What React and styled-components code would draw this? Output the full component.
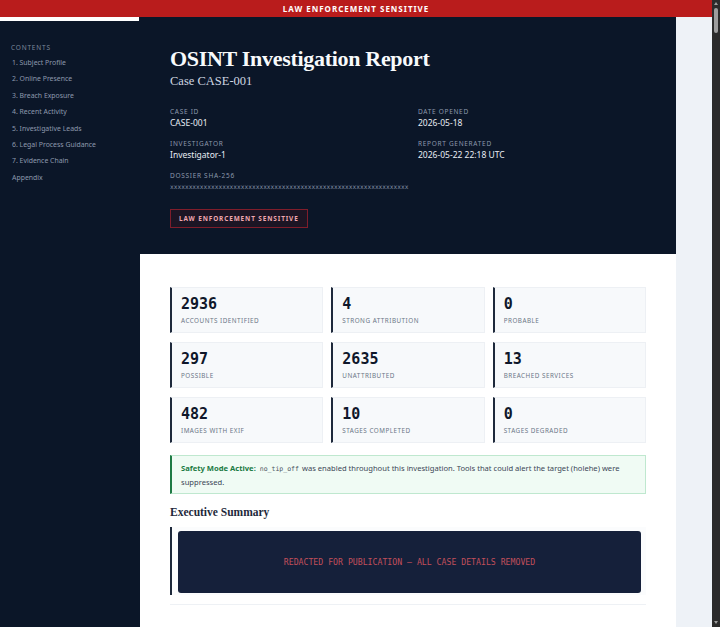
import React from "react";
import styled, { createGlobalStyle } from "styled-components";

const Global = createGlobalStyle`
  body {
    margin: 0;
    background: #eef2f7;
    font-family: "Noto Sans", "Open Sans", sans-serif;
    color: #1e293b;
  }
  * { box-sizing: border-box; }
`;

const Banner = styled.div`
  height: 17px;
  padding-right: 8px;
  background: #b91c1c;
  color: #fff;
  font-size: 8px;
  font-weight: 700;
  letter-spacing: 1px;
  display: flex;
  align-items: center;
  justify-content: center;
`;

const Layout = styled.div`
  display: grid;
  grid-template-columns: 140px 536px 1fr;
  min-height: 1400px;
`;

const Sidebar = styled.nav`
  background: #0b1628;
  display: flex;
  flex-direction: column;
`;

const Progress = styled.div`
  height: 4px;
  width: 139px;
  background: #ffffff;
`;

const TocTitle = styled.div`
  margin: 22px 0 3px 11px;
  font-size: 6.5px;
  letter-spacing: 0.8px;
  color: #7c889b;
  text-transform: uppercase;
`;

const TocLink = styled.a`
  display: block;
  padding-left: 12px;
  height: 16.4px;
  line-height: 16.4px;
  font-size: 6.9px;
  color: #8d99ad;
  text-decoration: none;
`;

const Main = styled.main`
  background: #ffffff;
  display: flex;
  flex-direction: column;
`;

const Header = styled.header`
  background: #0b1628;
  padding: 28px 30px 26px 30px;
  color: #fff;
`;

const Title = styled.h1`
  margin: 0;
  font-family: "Liberation Serif", "DejaVu Serif", serif;
  font-size: 22px;
  letter-spacing: -0.3px;
  font-weight: 700;
  line-height: 28px;
  color: #f8fafc;
`;

const Subtitle = styled.div`
  font-family: "Liberation Serif", "DejaVu Serif", serif;
  font-size: 12.5px;
  color: #cfd6e1;
  margin-top: 1px;
`;

const MetaGrid = styled.div`
  margin-top: 18px;
  display: grid;
  grid-template-columns: 248px 1fr;
  row-gap: 10px;
`;

const Meta = styled.div`
  grid-column: ${(p) => (p.$wide ? "1 / -1" : "auto")};
`;

const MetaLabel = styled.div`
  font-size: 6.5px;
  letter-spacing: 0.7px;
  text-transform: uppercase;
  color: #8b98ac;
  line-height: 10px;
`;

const MetaValue = styled.div`
  font-size: 8.5px;
  color: #e8edf4;
  line-height: 12px;
`;

const Hash = styled.div`
  font-family: "DejaVu Sans Mono", monospace;
  font-size: 6.2px;
  color: #7f8ba0;
  line-height: 12px;
`;

const Badge = styled.div`
  display: inline-flex;
  align-items: center;
  margin-top: 16px;
  height: 19px;
  padding: 0 8px;
  border: 1px solid #7f1d2b;
  background: #1c1524;
  color: #f0a8b0;
  font-size: 6.4px;
  font-weight: 700;
  letter-spacing: 0.9px;
`;

const Content = styled.div`
  padding: 33px 30px 0 30px;
`;

const StatGrid = styled.div`
  display: grid;
  grid-template-columns: repeat(3, 1fr);
  column-gap: 8px;
  row-gap: 9px;
`;

const StatCard = styled.div`
  height: 46px;
  background: #f7f9fb;
  border: 1px solid #edf0f4;
  border-left: 2px solid #1e293b;
  padding: 8px 9px 0 9px;
`;

const StatValue = styled.div`
  font-family: "DejaVu Sans Mono", monospace;
  font-weight: 700;
  font-size: 15px;
  line-height: 17px;
  color: #0f172a;
`;

const StatLabel = styled.div`
  margin-top: 3px;
  font-size: 6.3px;
  letter-spacing: 0.5px;
  text-transform: uppercase;
  color: #6b7686;
`;

const Safety = styled.div`
  margin-top: 12px;
  background: #f0fbf4;
  border: 1px solid #bfe8cf;
  border-left: 2px solid #1f7a45;
  padding: 6px 9px 4px 9px;
  font-size: 7.6px;
  line-height: 13px;
  color: #3b4656;
`;

const SafetyStrong = styled.strong`
  color: #1a7a43;
  font-weight: 700;
`;

const Code = styled.code`
  font-family: "DejaVu Sans Mono", monospace;
  font-size: 6.5px;
  color: #4b5563;
  margin: 0 3px 0 4px;
`;

const Section = styled.section`
  margin-top: 11px;
  padding-bottom: 9px;
  border-bottom: 1px solid #eef1f5;
`;

const SectionTitle = styled.h2`
  margin: 0 0 8px 0;
  font-family: "Liberation Serif", "DejaVu Serif", serif;
  font-size: 11.5px;
  font-weight: 700;
  color: #1e293b;
  line-height: 14px;
`;

const Quote = styled.div`
  background: #fbfcfd;
  border-left: 2px solid #1e293b;
  padding: 4px 5px 2px 6px;
`;

const Redacted = styled.div`
  height: 62px;
  background: #15203a;
  border-radius: 3px;
  display: flex;
  align-items: center;
  justify-content: center;
  font-family: "DejaVu Sans Mono", monospace;
  font-size: 8.2px;
  color: #c24f5b;
`;

const Gutter = styled.div`
  background: #eef2f7;
`;

const ScrollTrack = styled.div`
  position: fixed;
  top: 0;
  right: 0;
  width: 8px;
  height: 100vh;
  background: #2b2b2b;
  display: flex;
  flex-direction: column;
  align-items: center;
`;

const Arrow = styled.div`
  width: 0;
  height: 0;
  border-left: 2.5px solid transparent;
  border-right: 2.5px solid transparent;
  ${(p) => (p.$down ? "border-top: 3px solid #9d9d9d;" : "border-bottom: 3px solid #9d9d9d;")}
  margin: ${(p) => (p.$down ? "auto 0 3px 0" : "2px 0 0 0")};
`;

const Thumb = styled.div`
  margin-top: 3px;
  width: 4px;
  height: 25px;
  border-radius: 2px;
  background: #9d9d9d;
`;

const toc = [
  "1. Subject Profile",
  "2. Online Presence",
  "3. Breach Exposure",
  "4. Recent Activity",
  "5. Investigative Leads",
  "6. Legal Process Guidance",
  "7. Evidence Chain",
  "Appendix",
];

const stats = [
  ["2936", "Accounts Identified"],
  ["4", "Strong Attribution"],
  ["0", "Probable"],
  ["297", "Possible"],
  ["2635", "Unattributed"],
  ["13", "Breached Services"],
  ["482", "Images with EXIF"],
  ["10", "Stages Completed"],
  ["0", "Stages Degraded"],
];

export default function App() {
  return (
    <>
      <Global />
      <Banner>LAW ENFORCEMENT SENSITIVE</Banner>
      <Layout>
        <Sidebar>
          <Progress />
          <TocTitle>Contents</TocTitle>
          {toc.map((t) => (
            <TocLink key={t} href="#">{t}</TocLink>
          ))}
        </Sidebar>
        <Main>
          <Header>
            <Title>OSINT Investigation Report</Title>
            <Subtitle>Case CASE-001</Subtitle>
            <MetaGrid>
              <Meta>
                <MetaLabel>Case ID</MetaLabel>
                <MetaValue>CASE-001</MetaValue>
              </Meta>
              <Meta>
                <MetaLabel>Date Opened</MetaLabel>
                <MetaValue>2026-05-18</MetaValue>
              </Meta>
              <Meta>
                <MetaLabel>Investigator</MetaLabel>
                <MetaValue>Investigator-1</MetaValue>
              </Meta>
              <Meta>
                <MetaLabel>Report Generated</MetaLabel>
                <MetaValue>2026-05-22 22:18 UTC</MetaValue>
              </Meta>
              <Meta $wide>
                <MetaLabel>Dossier SHA-256</MetaLabel>
                <Hash>{"x".repeat(64)}</Hash>
              </Meta>
            </MetaGrid>
            <Badge>LAW ENFORCEMENT SENSITIVE</Badge>
          </Header>
          <Content>
            <StatGrid>
              {stats.map(([v, l], i) => (
                <StatCard key={i}>
                  <StatValue>{v}</StatValue>
                  <StatLabel>{l}</StatLabel>
                </StatCard>
              ))}
            </StatGrid>
            <Safety>
              <SafetyStrong>Safety Mode Active:</SafetyStrong>
              <Code>no_tip_off</Code>was enabled throughout this investigation. Tools that could
              alert the target (holehe) were suppressed.
            </Safety>
            <Section>
              <SectionTitle>Executive Summary</SectionTitle>
              <Quote>
                <Redacted>REDACTED FOR PUBLICATION — ALL CASE DETAILS REMOVED</Redacted>
              </Quote>
            </Section>
          </Content>
        </Main>
        <Gutter />
      </Layout>
      <ScrollTrack>
        <Arrow />
        <Thumb />
        <Arrow $down />
      </ScrollTrack>
    </>
  );
}
